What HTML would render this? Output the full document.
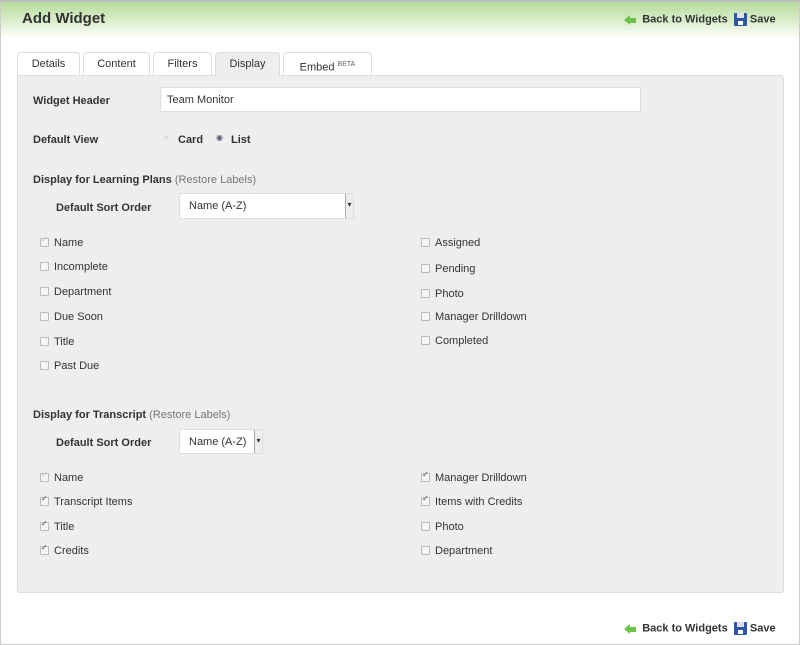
<!DOCTYPE html>
<html><head><style>
body{margin:0;width:800px;height:645px;position:relative;font-family:"Liberation Sans",sans-serif;font-size:11px;color:#333;background:#fff;overflow:hidden}
.frame{position:absolute;left:0;top:0;border:1px solid #ccc;border-top:2px solid #bbb;box-sizing:border-box;width:800px;height:645px}
.hdr{position:absolute;left:0;top:0;width:800px;height:38px;background:linear-gradient(#b2d996,#e2f1d6 65%,#fff)}
.a{position:absolute;white-space:nowrap}
.title{left:22px;top:10px;font-size:15px;font-weight:bold;color:#333}
.lnk{font-weight:bold;font-size:11px;color:#333}
.panel{position:absolute;left:17px;top:75px;width:767px;height:518px;background:#eee;border:1px solid #ddd;border-radius:0 3px 3px 3px;box-sizing:border-box}
.tab{position:absolute;top:52px;height:23px;background:#fff;border:1px solid #ddd;border-bottom:none;border-radius:4px 4px 0 0;box-sizing:border-box;text-align:center;line-height:23px;font-size:11px}
.b{font-weight:bold}
.t{margin-top:1px}
.cb{position:absolute;width:7px;height:7px;border:1px solid #bbb;background:#f5f5f5;border-radius:1px}
.cb.c::after{content:"✓";position:absolute;left:0;top:-4px;font-size:8px;color:#446}
.cb.d::after{content:"✓";position:absolute;left:0;top:-4px;font-size:8px;color:#bbb}
.sel{position:absolute;background:#fff;border:1px solid #ddd;border-radius:2px;box-sizing:border-box;padding-left:9px;line-height:25px}
.sel i{position:absolute;right:0;top:0;bottom:0;width:7px;border-left:1px solid #aaa;background:#eee;font-style:normal;font-size:8px;line-height:22px;text-align:center}
.arrow{display:inline-block;width:0;height:0;border-top:5px solid transparent;border-bottom:5px solid transparent;border-right:6px solid #6cc24a;vertical-align:middle;position:relative}
.arrow::after{content:"";position:absolute;left:6px;top:-2px;width:6px;height:5px;background:#6cc24a}
.disk{display:inline-block;width:13px;height:13px;background:#2c56a6;vertical-align:middle;position:relative;border-radius:1px}
.disk::after{content:"";position:absolute;left:3px;top:0;width:7px;height:5px;background:#dde}
.disk::before{content:"";position:absolute;left:4px;bottom:1px;width:5px;height:4px;background:#fff}
.p div.a{transform:translateY(1px)}
</style></head><body>
<div class="hdr"></div>
<div class="frame"></div>
<div class="a title">Add Widget</div>
<div class="a lnk" style="left:624px;top:13px"><span class="arrow"></span>&nbsp;&nbsp;&nbsp;&nbsp;Back to Widgets&nbsp;&nbsp;<span class="disk"></span> Save</div>
<div class="a lnk" style="left:624px;top:622px"><span class="arrow"></span>&nbsp;&nbsp;&nbsp;&nbsp;Back to Widgets&nbsp;&nbsp;<span class="disk"></span> Save</div>

<div class="panel"></div>
<div class="tab" style="left:17px;width:63px">Details</div>
<div class="tab" style="left:83px;width:67px">Content</div>
<div class="tab" style="left:153px;width:59px">Filters</div>
<div class="tab" style="left:215px;width:65px;background:#eee;height:24px">Display</div>
<div class="tab" style="left:283px;width:89px">Embed <sup style="font-size:7px;color:#666">BETA</sup></div>

<div class="p">
<div class="a b" style="left:33px;top:94px">Widget Header</div>
<div class="sel" style="left:160px;top:87px;width:481px;height:25px;padding-left:6px">Team Monitor</div>
<div class="a b" style="left:33px;top:133px">Default View</div>
<div class="a" style="left:164px;top:132px;font-size:8px;color:#aaa">○</div>
<div class="a b" style="left:178px;top:133px">Card</div>
<div class="a" style="left:216px;top:132px;font-size:8px;color:#557">◉</div>
<div class="a b" style="left:231px;top:133px">List</div>

<div class="a b" style="left:33px;top:173px">Display for Learning Plans <span style="font-weight:normal;color:#777">(Restore Labels)</span></div>
<div class="a b" style="left:56px;top:201px">Default Sort Order</div>
<div class="sel" style="left:179px;top:193px;width:175px;height:26px">Name (A-Z)<i>▾</i></div>

<div class="cb d" style="left:40px;top:238px"></div><div class="a" style="left:54px;top:236px">Name</div>
<div class="cb" style="left:40px;top:262px"></div><div class="a" style="left:54px;top:260px">Incomplete</div>
<div class="cb" style="left:40px;top:287px"></div><div class="a" style="left:54px;top:285px">Department</div>
<div class="cb" style="left:40px;top:312px"></div><div class="a" style="left:54px;top:310px">Due Soon</div>
<div class="cb" style="left:40px;top:337px"></div><div class="a" style="left:54px;top:335px">Title</div>
<div class="cb" style="left:40px;top:361px"></div><div class="a" style="left:54px;top:359px">Past Due</div>
<div class="cb" style="left:421px;top:238px"></div><div class="a" style="left:435px;top:236px">Assigned</div>
<div class="cb" style="left:421px;top:264px"></div><div class="a" style="left:435px;top:262px">Pending</div>
<div class="cb" style="left:421px;top:289px"></div><div class="a" style="left:435px;top:287px">Photo</div>
<div class="cb" style="left:421px;top:312px"></div><div class="a" style="left:435px;top:310px">Manager Drilldown</div>
<div class="cb" style="left:421px;top:336px"></div><div class="a" style="left:435px;top:334px">Completed</div>

<div class="a b" style="left:33px;top:408px">Display for Transcript <span style="font-weight:normal;color:#777">(Restore Labels)</span></div>
<div class="a b" style="left:56px;top:436px">Default Sort Order</div>
<div class="sel" style="left:179px;top:429px;width:84px;height:25px">Name (A-Z)<i>▾</i></div>

<div class="cb d" style="left:40px;top:473px"></div><div class="a" style="left:54px;top:471px">Name</div>
<div class="cb c" style="left:40px;top:497px"></div><div class="a" style="left:54px;top:495px">Transcript Items</div>
<div class="cb c" style="left:40px;top:522px"></div><div class="a" style="left:54px;top:520px">Title</div>
<div class="cb c" style="left:40px;top:546px"></div><div class="a" style="left:54px;top:544px">Credits</div>
<div class="cb c" style="left:421px;top:473px"></div><div class="a" style="left:435px;top:471px">Manager Drilldown</div>
<div class="cb c" style="left:421px;top:497px"></div><div class="a" style="left:435px;top:495px">Items with Credits</div>
<div class="cb" style="left:421px;top:522px"></div><div class="a" style="left:435px;top:520px">Photo</div>
<div class="cb" style="left:421px;top:546px"></div><div class="a" style="left:435px;top:544px">Department</div>
</div>
</body></html>
